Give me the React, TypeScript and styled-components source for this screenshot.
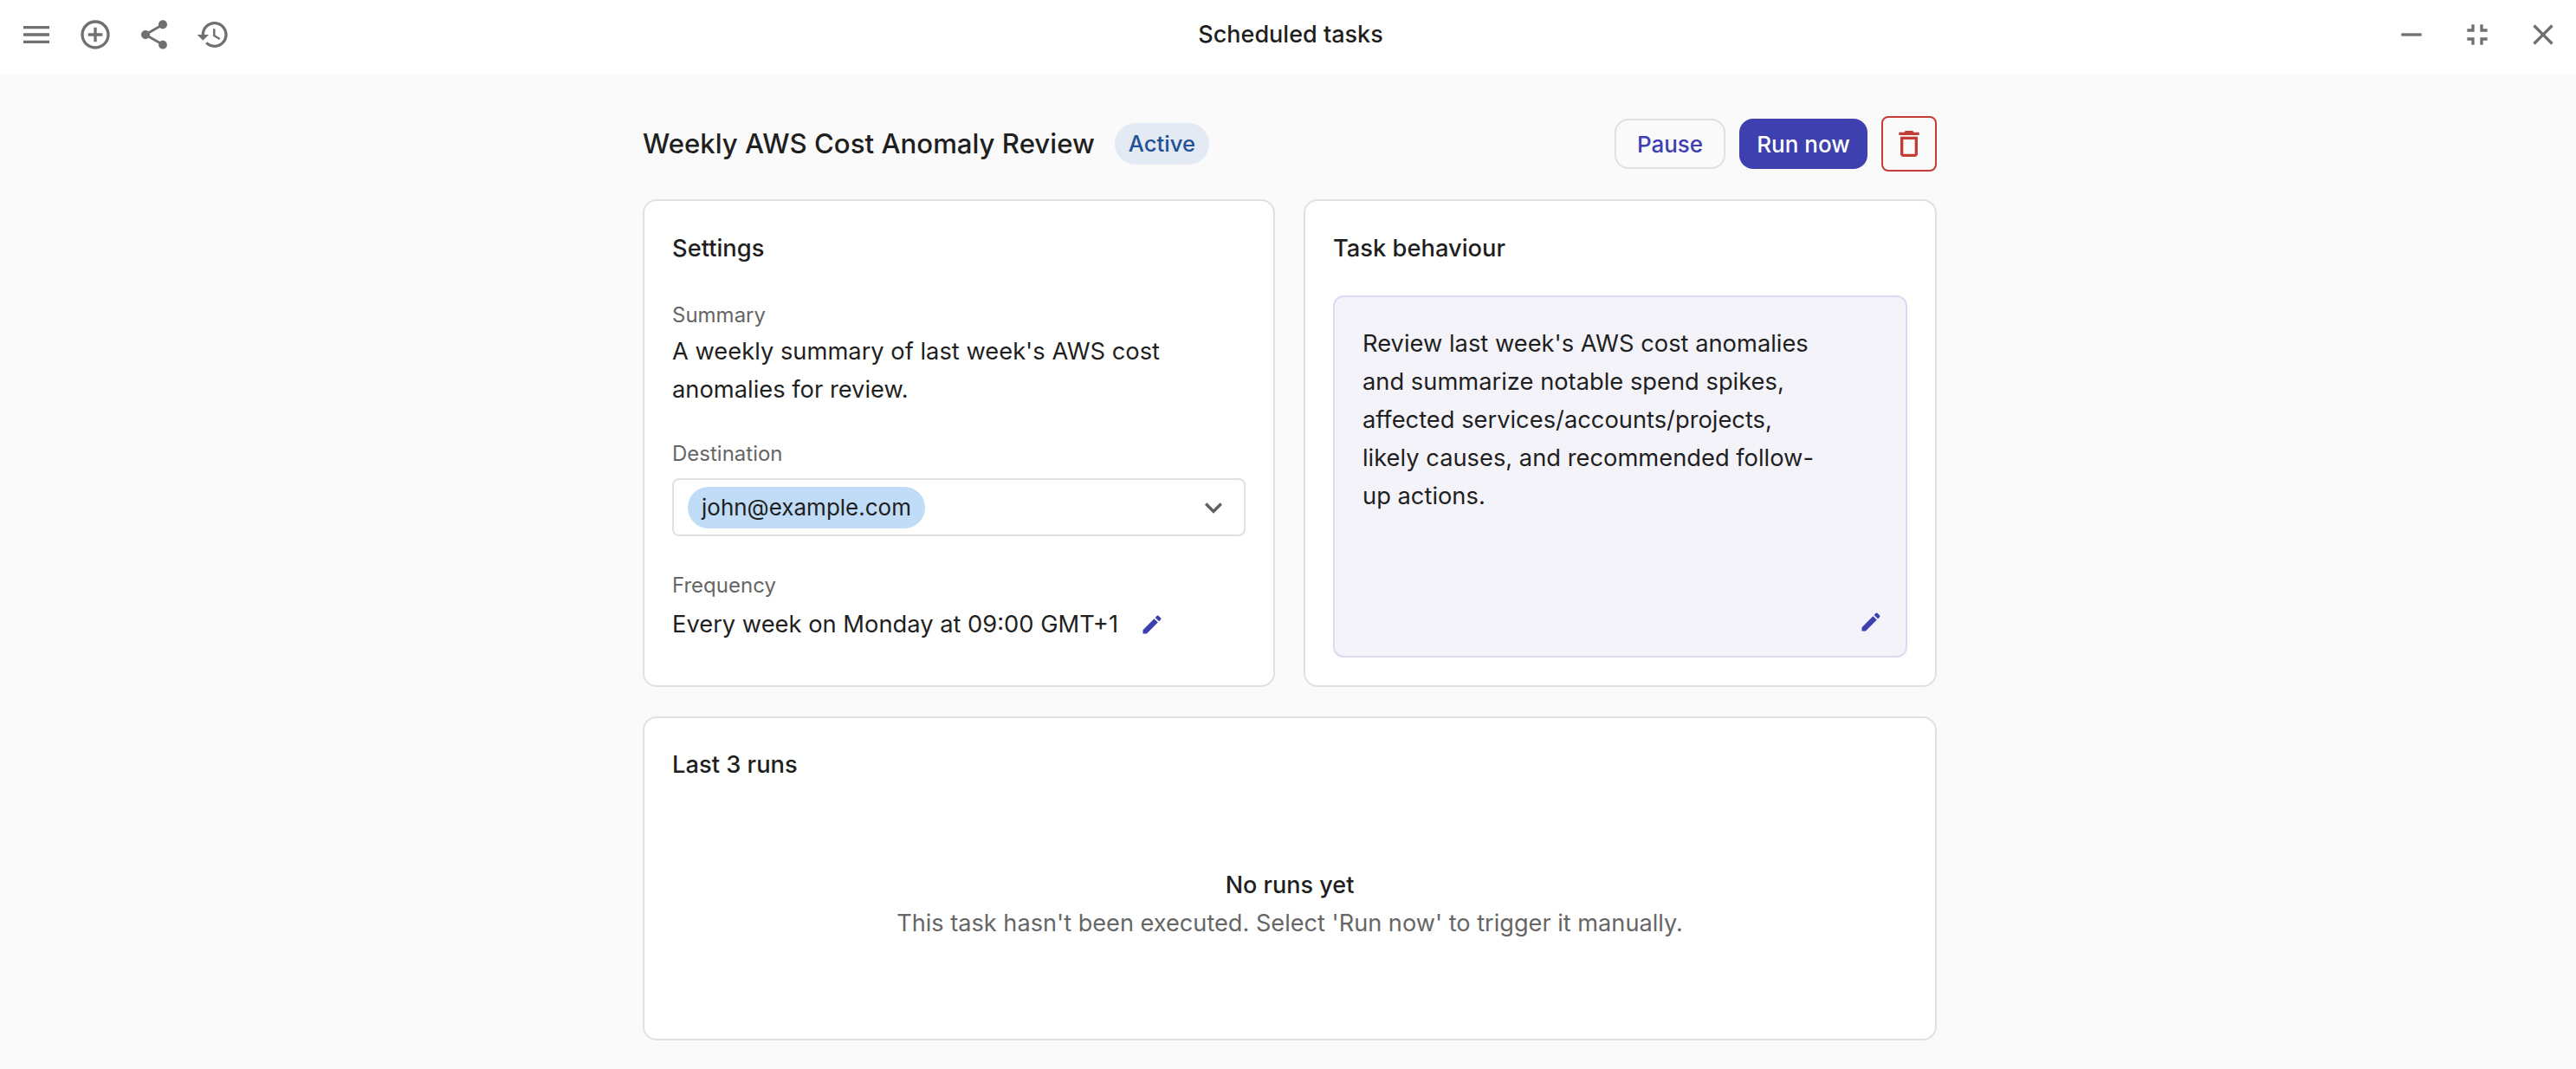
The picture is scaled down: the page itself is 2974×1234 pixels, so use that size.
import * as React from "react";
import styled, { createGlobalStyle } from "styled-components";

const icons = {
  menu: "M3 18h18v-2H3v2zm0-5h18v-2H3v2zm0-7v2h18V6H3z",
  add: "M13 7h-2v4H7v2h4v4h2v-4h4v-2h-4V7zm-1-5C6.48 2 2 6.48 2 12s4.48 10 10 10 10-4.48 10-10S17.52 2 12 2zm0 18c-4.41 0-8-3.59-8-8s3.59-8 8-8 8 3.59 8 8-3.59 8-8 8z",
  share:
    "M18 16.08c-.76 0-1.44.3-1.96.77L8.91 12.7c.05-.23.09-.46.09-.7s-.04-.47-.09-.7l7.05-4.11c.54.5 1.25.81 2.04.81 1.66 0 3-1.34 3-3s-1.34-3-3-3-3 1.34-3 3c0 .24.04.47.09.7L8.04 9.81C7.5 9.31 6.79 9 6 9c-1.66 0-3 1.34-3 3s1.34 3 3 3c.79 0 1.5-.31 2.04-.81l7.12 4.16c-.05.21-.08.43-.08.65 0 1.61 1.31 2.92 2.92 2.92 1.61 0 2.92-1.31 2.92-2.92s-1.31-2.92-2.92-2.92z",
  history:
    "M13 3c-4.97 0-9 4.03-9 9H1l3.89 3.89.07.14L9 12H6c0-3.87 3.13-7 7-7s7 3.13 7 7-3.13 7-7 7c-1.93 0-3.68-.79-4.94-2.06l-1.42 1.42C8.27 19.99 10.51 21 13 21c4.97 0 9-4.03 9-9s-4.03-9-9-9zm-1 5v5l4.28 2.54.72-1.21-3.5-2.08V8H12z",
  minimize: "M19 13H5v-2h14v2z",
  fullscreenExit:
    "M5 16h3v3h2v-5H5v2zm3-8H5v2h5V5H8v3zm6 11h2v-3h3v-2h-5v5zm2-11V5h-2v5h5V8h-3z",
  close:
    "M19 6.41L17.59 5 12 10.59 6.41 5 5 6.41 10.59 12 5 17.59 6.41 19 12 13.41 17.59 19 19 17.59 13.41 12z",
  trash:
    "M6 19c0 1.1.9 2 2 2h8c1.1 0 2-.9 2-2V7H6v12zM8 9h8v10H8V9zm7.5-5l-1-1h-5l-1 1H5v2h14V4z",
  edit: "M3 17.25V21h3.75L17.81 9.94l-3.75-3.75L3 17.25zM20.71 7.04c.39-.39.39-1.02 0-1.41l-2.34-2.34c-.39-.39-1.02-.39-1.41 0l-1.83 1.83 3.75 3.75 1.83-1.83z",
  chevron: "M7.41 8.59L12 13.17l4.59-4.58L18 10l-6 6-6-6 1.41-1.41z",
};

type IconProps = {
  name: keyof typeof icons;
  size?: number;
};

function Icon({ name, size = 40 }: IconProps) {
  return (
    <svg
      width={size}
      height={size}
      viewBox="0 0 24 24"
      fill="currentColor"
      style={{ display: "block" }}
    >
      <path d={icons[name]} />
    </svg>
  );
}

function App() {
  return (
    <AppWrapper>
      <GlobalStyle />
      <Header>
        <HeaderIcons $gap={28}>
          <Icon name="menu" />
          <Icon name="add" />
          <Icon name="share" />
          <Icon name="history" />
        </HeaderIcons>
        <HeaderTitle>Scheduled tasks</HeaderTitle>
        <HeaderIcons $gap={36} $end>
          <Icon name="minimize" />
          <Icon name="fullscreenExit" />
          <Icon name="close" />
        </HeaderIcons>
      </Header>
      <Content>
        <TitleRow>
          <TaskTitle>Weekly AWS Cost Anomaly Review</TaskTitle>
          <StatusChip>Active</StatusChip>
          <Actions>
            <PauseButton>Pause</PauseButton>
            <RunButton>Run now</RunButton>
            <DeleteButton>
              <Icon name="trash" />
            </DeleteButton>
          </Actions>
        </TitleRow>
        <CardsGrid>
          <Card>
            <CardTitle>Settings</CardTitle>
            <Field $top={36}>
              <FieldLabel>Summary</FieldLabel>
              <FieldValue>
                A weekly summary of last week's AWS cost anomalies for review.
              </FieldValue>
            </Field>
            <Field $top={34}>
              <FieldLabel>Destination</FieldLabel>
              <SelectBox>
                <EmailChip>john@example.com</EmailChip>
                <ChevronWrapper>
                  <Icon name="chevron" size={40} />
                </ChevronWrapper>
              </SelectBox>
            </Field>
            <Field $top={39}>
              <FieldLabel>Frequency</FieldLabel>
              <FrequencyRow>
                <FrequencyValue>
                  Every week on Monday at 09:00 GMT+1
                </FrequencyValue>
                <EditIcon>
                  <Icon name="edit" size={28} />
                </EditIcon>
              </FrequencyRow>
            </Field>
          </Card>
          <Card>
            <CardTitle>Task behaviour</CardTitle>
            <BehaviourBox>
              <BehaviourText>
                Review last week's AWS cost anomalies and summarize notable
                spend spikes, affected services/accounts/projects, likely
                causes, and recommended follow-up actions.
              </BehaviourText>
              <BehaviourEdit>
                <Icon name="edit" size={28} />
              </BehaviourEdit>
            </BehaviourBox>
          </Card>
          <WideCard>
            <WideCardTitle>Last 3 runs</WideCardTitle>
            <EmptyState>
              <EmptyTitle>No runs yet</EmptyTitle>
              <EmptyCopy>
                This task hasn't been executed. Select 'Run now' to trigger it
                manually.
              </EmptyCopy>
            </EmptyState>
          </WideCard>
        </CardsGrid>
      </Content>
    </AppWrapper>
  );
}

export default App;

const GlobalStyle = createGlobalStyle`
  html, body {
    margin: 0;
    padding: 0;
    background: #fafafa;
  }
  * {
    box-sizing: border-box;
  }
`;

const AppWrapper = styled.div`
  width: 100%;
  min-height: 100vh;
  overflow: hidden;
  background: #fafafa;
  color: #1f1f1f;
  font-family: Inter, "Liberation Sans", sans-serif;
`;

const Header = styled.header`
  display: grid;
  grid-template-columns: 1fr auto 1fr;
  align-items: center;
  height: 86px;
  padding: 0 18px 6px 22px;
  background: #ffffff;
`;

const HeaderIcons = styled.div<{ $gap: number; $end?: boolean }>`
  display: flex;
  align-items: center;
  gap: ${(props) => props.$gap}px;
  justify-content: ${(props) => (props.$end ? "flex-end" : "flex-start")};
  color: #707070;
`;

const HeaderTitle = styled.h1`
  margin: 0 0 0 2px;
  font-size: 27px;
  font-weight: 500;
  line-height: 40px;
`;

const Content = styled.main`
  width: 1494px;
  margin: 0 auto;
  padding-top: 48px;
  transform: translateX(2px);
`;

const TitleRow = styled.div`
  display: flex;
  align-items: center;
  height: 64px;
`;

const TaskTitle = styled.h2`
  margin: 0;
  font-size: 31.2px;
  font-weight: 450;
  line-height: 48px;
`;

const StatusChip = styled.span`
  margin-left: 23px;
  padding: 0 16px;
  height: 48px;
  border-radius: 24px;
  background: #e3eaf3;
  color: #1f5296;
  font-size: 25.6px;
  font-weight: 450;
  line-height: 48px;
`;

const Actions = styled.div`
  display: flex;
  align-items: center;
  gap: 16px;
  margin-left: auto;
`;

const PauseButton = styled.button`
  width: 128px;
  height: 58px;
  padding: 0;
  border: 2px solid #e0e0e0;
  border-radius: 16px;
  background: transparent;
  color: #3d40ae;
  font: 500 26px Inter, sans-serif;
`;

const RunButton = styled.button`
  width: 148px;
  height: 58px;
  padding: 0;
  border: 0;
  border-radius: 16px;
  background: #3d40ae;
  color: #ffffff;
  font: 500 26px Inter, sans-serif;
`;

const DeleteButton = styled.button`
  display: flex;
  justify-content: center;
  align-items: center;
  width: 64px;
  height: 64px;
  padding: 0;
  border: 2px solid #c43d35;
  border-radius: 8px;
  background: transparent;
  color: #c43d35;
`;

const CardsGrid = styled.div`
  display: grid;
  grid-template-columns: 730px 731px;
  gap: 34px 33px;
  margin-top: 32px;
`;

const Card = styled.section`
  display: flex;
  flex-direction: column;
  height: 563px;
  padding: 32px;
  border: 2px solid #e0e0e0;
  border-radius: 16px;
  background: #ffffff;
`;

const WideCard = styled(Card)`
  grid-column: 1 / 3;
  height: 374px;
`;

const CardTitle = styled.h3`
  margin: 0;
  font-size: 27.3px;
  font-weight: 450;
  line-height: 46px;
`;

const WideCardTitle = styled(CardTitle)`
  line-height: 44px;
`;

const Field = styled.div<{ $top: number }>`
  margin-top: ${(props) => props.$top}px;
`;

const FieldLabel = styled.div`
  color: #666666;
  font-size: 24px;
  line-height: 36px;
`;

const FieldValue = styled.div`
  margin-top: 2px;
  font-size: 27.3px;
  line-height: 44px;
`;

const SelectBox = styled.div`
  display: flex;
  align-items: center;
  height: 67px;
  margin-top: 10px;
  padding: 0 15px 0 16px;
  border: 2px solid #e0e0e0;
  border-radius: 8px;
  background: #ffffff;
`;

const EmailChip = styled.span`
  height: 48px;
  padding: 0 16px;
  border-radius: 24px;
  background: #c0dcf7;
  font-size: 26px;
  line-height: 48px;
`;

const ChevronWrapper = styled.span`
  margin-left: auto;
  color: #5f5f5f;
`;

const FrequencyRow = styled.div`
  display: flex;
  align-items: center;
  gap: 25px;
`;

const FrequencyValue = styled(FieldValue)`
  margin-top: 5px;
`;

const EditIcon = styled.span`
  margin-top: 5px;
  color: #3d40ae;
`;

const BehaviourBox = styled.div`
  position: relative;
  flex: 1;
  margin-top: 31px;
  padding: 32px 96px 32px 32px;
  border: 2px solid #dadbf0;
  border-radius: 12px;
  background: #f4f3fa;
`;

const BehaviourText = styled.p`
  margin: 0;
  font-size: 27.3px;
  line-height: 44px;
`;

const BehaviourEdit = styled.span`
  position: absolute;
  right: 26px;
  bottom: 25px;
  color: #3d40ae;
`;

const EmptyState = styled.div`
  padding-top: 95px;
  text-align: center;
`;

const EmptyTitle = styled.div`
  font-size: 27px;
  font-weight: 500;
  line-height: 44px;
`;

const EmptyCopy = styled.div`
  color: #666666;
  font-size: 27.15px;
  line-height: 44px;
`;
